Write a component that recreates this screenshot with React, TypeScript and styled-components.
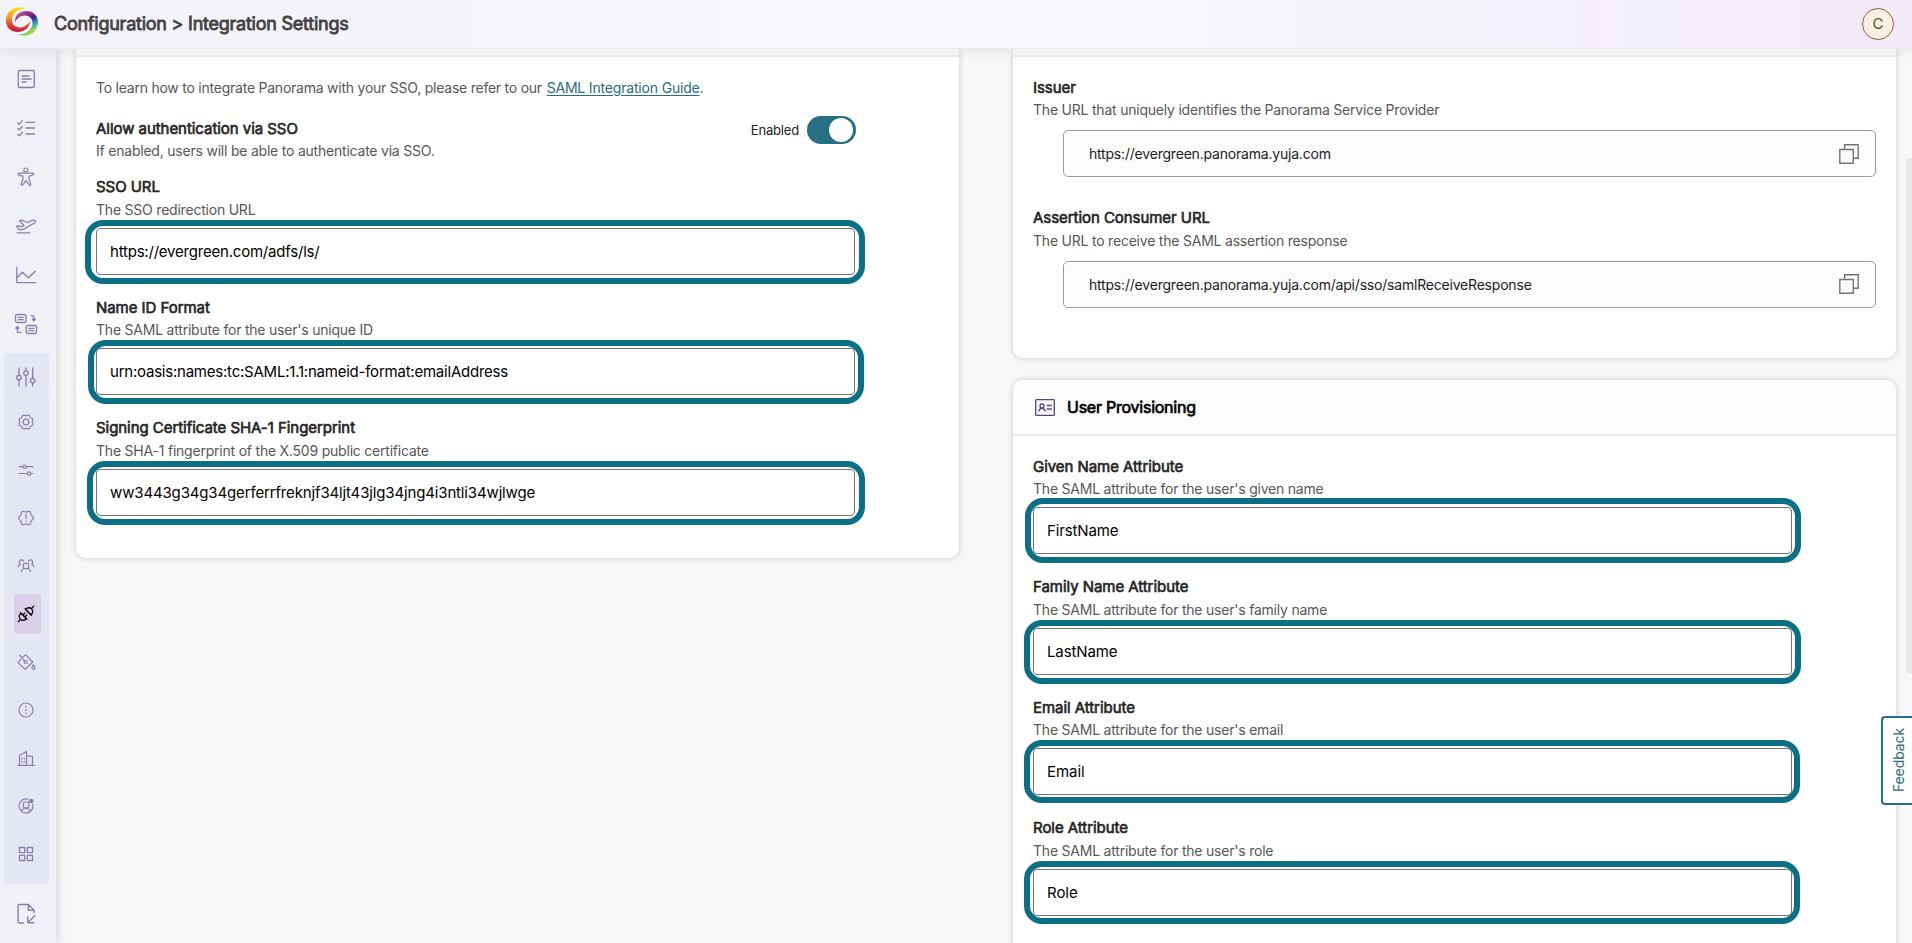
import React from 'react';
import styled, { createGlobalStyle } from 'styled-components';

const Global = createGlobalStyle`
  * { box-sizing: border-box; }
  html, body { margin: 0; height: 100%; overflow: hidden; }
  body {
    font-family: Inter, "Liberation Sans", sans-serif;
    font-size: 14px;
    color: #222;
    background: #f7f7f7;
  }
`;

const Page = styled.div`
  display: flex;
  flex-direction: column;
  width: 1912px;
  height: 943px;
  overflow: hidden;
  position: relative;
`;

const Header = styled.header`
  position: relative;
  z-index: 3;
  flex: none;
  height: 49px;
  display: flex;
  align-items: center;
  justify-content: space-between;
  padding: 0 18px 1px 6px;
  border-bottom: 1px solid #ebe9ee;
  background: linear-gradient(90deg, #f4f3f9 0%, #f5f4fa 30%, #f8f9fe 54%, #f4f1f8 75%, #f3eefb 86%, #f3edf9 93%, #f1eaf6 100%);
  box-shadow: 0 2px 12px rgba(0, 0, 0, 0.08);
`;

const Brand = styled.div`
  display: flex;
  align-items: center;
  gap: 16px;
  svg { display: block; position: relative; top: -1.5px; }
`;

const Title = styled.h1`
  margin: 0;
  font-size: 18px;
  line-height: 24px;
  font-weight: 400;
  letter-spacing: -0.24px;
  color: #434343;
  -webkit-text-stroke: 0.8px currentColor;
`;

const Avatar = styled.div`
  width: 32px;
  height: 32px;
  border-radius: 50%;
  border: 1px solid #856a45;
  background: #faefe0;
  color: #5c4a30;
  font-size: 15px;
  line-height: 30px;
  text-align: center;
`;

const Main = styled.div`
  flex: 1;
  min-height: 0;
  display: flex;
`;

const Sidebar = styled.nav`
  position: relative;
  z-index: 2;
  flex: none;
  width: 56px;
  display: flex;
  flex-direction: column;
  padding: 5.5px 7px 0 4px;
  background: #f0f1f7;
  box-shadow: 1px 0 10px rgba(0, 0, 0, 0.17);
`;

const NavItem = styled.div<{ $h: number }>`
  flex: none;
  height: ${(p) => p.$h}px;
  display: flex;
  align-items: center;
  justify-content: center;
  padding-right: 1px;
  color: #8c7cae;
  svg { display: block; overflow: visible; }
`;

const Group = styled.div`
  flex: none;
  margin-top: 4.5px;
`;

const GroupHead = styled(NavItem)`
  background: #e4e6f3;
  border-radius: 4px;
  padding-top: 9px;
`;

const SubMenu = styled.div`
  background: #e4e6f3;
  border-radius: 4px;
  padding: 6px 0;
`;

const ActiveMark = styled.div`
  width: 27px;
  height: 40px;
  margin-left: 3px;
  padding-right: 3px;
  display: flex;
  align-items: center;
  justify-content: center;
  border-radius: 4px;
  background: #dacfe8;
  color: #111;
`;

const Content = styled.main`
  flex: 1;
  display: flex;
  align-items: flex-start;
  gap: 54px;
  padding-left: 20px;
`;

const Column = styled.div`
  width: 883px;
  display: flex;
  flex-direction: column;
  gap: 22px;
`;

const Card = styled.section<{ $h: number; $open?: boolean }>`
  height: ${(p) => p.$h}px;
  background: #fff;
  border-radius: ${(p) => (p.$open ? '0 0 10px 10px' : '10px')};
  box-shadow: 0 0 6px rgba(0, 0, 0, 0.18);
`;

const CardEdge = styled.div`
  height: 8px;
  background: #fbfbfb;
  border-bottom: 2px solid #ededed;
`;

const CardHeader = styled.div`
  height: 56px;
  display: flex;
  align-items: center;
  gap: 12px;
  padding-left: 22px;
  background: #fcfcfc;
  border-bottom: 2px solid #ededed;
  border-radius: 10px 10px 0 0;
  svg { display: block; }
`;

const CardTitle = styled.h2`
  margin: 0;
  font-size: 16px;
  line-height: 22px;
  font-weight: 400;
  letter-spacing: -0.24px;
  color: #000;
  -webkit-text-stroke: 0.7px currentColor;
`;

const CardBody = styled.div<{ $top: number }>`
  padding: ${(p) => p.$top}px 20px 0;
`;

const Intro = styled.p`
  margin: 0;
  font-size: 14px;
  line-height: 20px;
  letter-spacing: -0.235px;
  color: #575757;
`;

const GuideLink = styled.a`
  margin-left: 1px;
  letter-spacing: -0.18px;
  color: #246d83;
  text-decoration: underline;
  text-underline-offset: 2px;
`;

const ToggleRow = styled.div`
  display: flex;
  justify-content: space-between;
  width: 760px;
  height: 58.3px;
  margin-top: 20px;
`;

const ToggleControl = styled.div`
  display: flex;
  align-items: center;
  gap: 8px;
  height: 24px;
  font-size: 13px;
  letter-spacing: -0.18px;
  color: #222;
`;

const Switch = styled.div`
  width: 49px;
  height: 28px;
  border-radius: 14px;
  background: #266f85;
  display: flex;
  align-items: center;
  justify-content: flex-end;
  padding-right: 3px;
`;

const Knob = styled.div`
  width: 24px;
  height: 24px;
  border-radius: 50%;
  background: #fff;
`;

const Label = styled.div`
  margin-bottom: 0.3px;
  font-size: 15px;
  line-height: 22px;
  letter-spacing: -0.05px;
  color: #262626;
  -webkit-text-stroke: 0.65px currentColor;
`;

const Hint = styled.div`
  font-size: 14px;
  line-height: 22.4px;
  letter-spacing: -0.215px;
  color: #575757;
`;

const FieldBox = styled.div`
  height: 120.5px;
`;

const InputWrap = styled.div`
  position: relative;
  width: 759px;
  margin-top: 6.9px;
`;

const Input = styled.div<{ $tracking: number }>`
  height: 47px;
  border: 1px solid #767676;
  border-radius: 4px;
  padding-left: 13px;
  font-size: 15px;
  line-height: 45px;
  letter-spacing: ${(p) => p.$tracking}px;
  color: #000;
`;

const Highlight = styled.div<{ $l: number; $t: number; $r: number; $b: number }>`
  position: absolute;
  left: ${(p) => -p.$l}px;
  top: ${(p) => -p.$t}px;
  right: ${(p) => -p.$r}px;
  bottom: ${(p) => -p.$b}px;
  border: 6px solid #0b7085;
  border-radius: 18px;
`;

const CopyField = styled.div<{ $h: number }>`
  height: ${(p) => p.$h}px;
`;

const CopyBox = styled.div`
  display: flex;
  align-items: center;
  justify-content: space-between;
  height: 47px;
  margin: 8.7px 0 0 30px;
  padding: 0 16px 0 25px;
  border: 1px solid #9b9b9b;
  border-radius: 5px;
  background: #fcfcfc;
  font-size: 14px;
  letter-spacing: -0.2px;
  color: #1c1c1c;
`;

const Thumb = styled.div`
  position: absolute;
  right: 0;
  top: 158px;
  width: 6px;
  height: 515px;
  border-radius: 4px 0 0 4px;
  background: #e7e7e7;
`;

const Feedback = styled.div`
  position: absolute;
  z-index: 4;
  right: 0;
  top: 716px;
  width: 31px;
  height: 89px;
  display: flex;
  align-items: center;
  justify-content: center;
  padding-left: 2px;
  border: 2px solid #266f85;
  border-right: 0;
  border-radius: 4px 0 0 4px;
  background: #fff;
  color: #266f85;
  font-size: 14px;
  letter-spacing: -0.1px;
  span { writing-mode: vertical-rl; transform: rotate(180deg); }
`;

function Icon({ children, w = 1.1 }: { children: React.ReactNode; w?: number }) {
  return (
    <svg width="24" height="24" viewBox="0 0 24 24" fill="none" stroke="currentColor" strokeWidth={w} strokeLinecap="round" strokeLinejoin="round">
      {children}
    </svg>
  );
}

/* Closed outline whose radius swings between lobes. */
function lobes(count: number, base: number, swing: number, phase = 0) {
  const pts: string[] = [];
  for (let i = 0; i < 96; i++) {
    const a = (i / 96) * Math.PI * 2;
    const r = base + swing * Math.cos(count * a + phase);
    pts.push(`${(12 + r * Math.cos(a)).toFixed(2)} ${(12 + r * Math.sin(a)).toFixed(2)}`);
  }
  return `M${pts.join('L')}Z`;
}

const topIcons = [
  <Icon w={1.3}><rect x="4.3" y="3.5" width="16" height="17" rx="1.4" /><path d="M8 9h7M8 12h9M8 15h4" /></Icon>,
  <Icon w={1.3}><path d="M12 6.3h8.6M12 12h8.6M12 18h8.6M3.8 7l1.5 1.3L8.4 4.7M3.8 12.5l1.5 1.3L8.4 10.3M3.8 18.5l1.5 1.3L8.4 16.3" /></Icon>,
  <Icon w={1.2}><circle cx="11.8" cy="5" r="2" /><path d="M4.6 8.2h14.6c.8.3.7 1.5 0 1.7l-4.2 1.300v3l1.900 5.200c.1 1-1.200 1.300-1.700.5L12 15.500l-3.200 4.400c-.6.700-1.800.4-1.700-.6l1.900-5.100v-3L4.500 9.900c-.7-.3-.6-1.400.1-1.700z" /></Icon>,
  <Icon w={1.3}><path d="M3.2 18.9h12.5" /><path d="M5.500 15.900 2.600 12.300l1.700-.6 2.700 1.200 3-1.700-4.600-4.300 2-.8 6.600 2.400 3.900-2.100c1.500-.7 3.300-.2 3.700 1 .2.700-.4 1.200-1.200 1.600L10.200 14.900c-1.600.8-3.300 1.300-4.700 1z" /></Icon>,
  <Icon w={1.3}><path d="M2.8 4.3v15.4h18.800M3 14.700l5.500-5.400 6 5.400 6.700-6.500" /></Icon>,
  <Icon w={1.3}><rect x="1.5" y="2.5" width="10.5" height="8" rx="2" /><path d="M4.3 5.3h5M4.3 7.7h5" /><rect x="12.2" y="13.5" width="10.3" height="8" rx="2" /><path d="M14.8 16.3h5M14.8 18.7h5" /><path d="M17 3.8h2.8v4.5M18.3 7l1.5 1.7L21.300 7M7 20.300H3.400v-5M1.900 16.200l1.500-1.700 1.500 1.700" /></Icon>,
];

const subIcons = [
  <Icon w={1.2}><path d={lobes(8, 6.8, 0.55, Math.PI)} /><circle cx="12" cy="12" r="2.9" /></Icon>,
  <Icon w={1.2}><path d="M5.2 8.7h3.5M12.3 8.7h6.4M5.2 15.5h8M16.8 15.5h1.900" /><circle cx="10.5" cy="8.7" r="1.7" /><circle cx="15" cy="15.5" r="1.7" /></Icon>,
  <Icon w={1.2}><path d={lobes(6, 6.7, 0.8)} /><path d="M12 8.5v4.2M12 15v.4" /></Icon>,
  <Icon w={1.2}><rect x="9.3" y="9.3" width="5.4" height="5.4" rx="1.6" /><path d="M7.500 17.500c.2-1.300 1-2.300 2.200-2.800M16.500 17.500c-.2-1.300-1-2.300-2.200-2.800M4.200 12.700c.2-1.200.9-2.100 2-2.600-1.500-.9-1-4.300 1.200-4.300 1.100 0 1.900.6 2.200 1.500M19.800 12.700c-.2-1.200-.9-2.100-2-2.600 1.500-.9 1-4.300-1.200-4.300-1.100 0-1.900.6-2.200 1.500" /></Icon>,
  <Icon w={1.3}><path d="M4.3 19.7 6.7 17.3M17.3 6.7l2.4-2.4" /><path d="M7.100 11.300c-2 1.600-2.200 4-.7 5.900 1.600 1.600 4.200 1.400 5.900-.7z" /><path d="M16.900 12.700c2-1.600 2.200-4 .7-5.900-1.600-1.600-4.200-1.400-5.900.7z" /><path d="m8.800 13 2-2M10.800 15l2-2M6.400 10.600l6.600 6.600M11 6.800l6.600 6.600" /></Icon>,
  <Icon w={1.2}><path d="M11.500 4.700 18.800 12 11 19.300 4 12.300zM5.500 5.200l5.300 5.900" /><circle cx="11.6" cy="12" r="1.5" /><path d="M19.400 14.700c1 1.500 1.600 2.300 1.600 3.100a1.500 1.500 0 0 1-3 0c0-.8.500-1.600 1.400-3.100z" /></Icon>,
  <Icon w={1.2}><circle cx="12" cy="12" r="7" /><path d="M12 8.300v1M12 11.500v1M12 14.800v1" /></Icon>,
  <Icon w={1.2}><path d="M3.800 19.400h16.600M5.500 19.200V9.500l7-4v13.700M12.500 10.200h6v9" /><path d="M8 12v1M10.300 12v1M8 15.300v1M10.300 15.300v1" /></Icon>,
  <Icon w={1.2}><path d="M13.700 5.200A7 7 0 1 0 18.800 10.400" /><rect x="9.3" y="8" width="5.6" height="5.8" rx="1.8" /><path d="M7.300 17c.6-1.700 2-2.500 4.700-2.500s4.100.8 4.700 2.500" /><circle cx="17.2" cy="7" r="1.7" fill="currentColor" /></Icon>,
  <Icon w={1.3}><path d="M5.500 5.500h5.200v5.200H5.500zM13.300 5.500h5.200v5.200h-5.200zM5.500 13.300h5.200v5.200H5.500zM13.300 13.300h5.200v5.200h-5.200z" /></Icon>,
];

function Logo() {
  return (
    <svg width="32" height="30" viewBox="0 0 32 30">
      <defs>
        <linearGradient id="warm" x1="0.6" y1="0" x2="0.5" y2="1">
          <stop offset="0" stopColor="#fbe21c" /><stop offset="0.45" stopColor="#f39a2b" /><stop offset="0.8" stopColor="#e0322d" /><stop offset="1" stopColor="#b3244f" />
        </linearGradient>
        <linearGradient id="cool" gradientUnits="userSpaceOnUse" x1="9" y1="8" x2="20" y2="28">
          <stop offset="0" stopColor="#b65aa8" /><stop offset="0.25" stopColor="#8b2d88" /><stop offset="0.5" stopColor="#3b2a86" /><stop offset="0.74" stopColor="#2b9fd6" /><stop offset="0.95" stopColor="#9ad84b" />
        </linearGradient>
      </defs>
      <path d="M20 1.500C10-2.500 0 3.500 0 13.500c0 7 5 11.500 11.500 11.500 7.500 0 12.500-5 13-11.500-2.500 4.500-7 7.500-11.500 7C8 20 5.500 16.500 6 12 6.700 6 12.500 1.500 20 1.500z" fill="url(#warm)" />
      <path d="M12 27.500c10 4 20-2 20-12C32 8.500 27 4 20.500 4 13 4 9 8 9 15c2.500-4.500 6-7 10.500-6.500 5 .5 7.500 4 7 8.500-.7 6-7 10.500-14.500 10.500z" fill="url(#cool)" />
    </svg>
  );
}

function CopyIcon() {
  return (
    <svg width="20" height="20" viewBox="0 0 20 20" fill="none" stroke="#747474" strokeWidth="1.4">
      <path d="M.8 5.500h13.500v13.700H.8zM5.600 5.500V.8h13.600v13.500h-4.900" />
    </svg>
  );
}

type FieldProps = { label: string; hint: string; value: string; ring: [number, number, number, number]; tracking?: number };

function Field({ label, hint, value, ring, tracking = -0.21 }: FieldProps) {
  return (
    <FieldBox>
      <Label>{label}</Label>
      <Hint>{hint}</Hint>
      <InputWrap>
        <Input $tracking={tracking}>{value}</Input>
        <Highlight $t={ring[0]} $r={ring[1]} $b={ring[2]} $l={ring[3]} />
      </InputWrap>
    </FieldBox>
  );
}

const ssoFields: FieldProps[] = [
  { label: 'SSO URL', hint: 'The SSO redirection URL', value: 'https://evergreen.com/adfs/ls/', ring: [8, 10, 9, 11] },
  { label: 'Name ID Format', hint: "The SAML attribute for the user's unique ID", value: 'urn:oasis:names:tc:SAML:1.1:nameid-format:emailAddress', ring: [8, 9, 9, 8], tracking: -0.225 },
  { label: 'Signing Certificate SHA-1 Fingerprint', hint: 'The SHA-1 fingerprint of the X.509 public certificate', value: 'ww3443g34g34gerferrfreknjf34ljt43jlg34jng4i3ntli34wjlwge', ring: [8, 10, 9, 9], tracking: -0.145 },
];

const userFields: FieldProps[] = [
  { label: 'Given Name Attribute', hint: "The SAML attribute for the user's given name", value: 'FirstName', ring: [9, 9, 9, 8], tracking: -0.12 },
  { label: 'Family Name Attribute', hint: "The SAML attribute for the user's family name", value: 'LastName', ring: [8, 9, 9, 9], tracking: -0.12 },
  { label: 'Email Attribute', hint: "The SAML attribute for the user's email", value: 'Email', ring: [8, 8, 8, 9], tracking: -0.05 },
  { label: 'Role Attribute', hint: "The SAML attribute for the user's role", value: 'Role', ring: [8, 8, 8, 9], tracking: -0.05 },
];

export default function App() {
  return (
    <Page>
      <Global />
      <Header>
        <Brand>
          <Logo />
          <Title>Configuration &gt; Integration Settings</Title>
        </Brand>
        <Avatar>C</Avatar>
      </Header>
      <Main>
        <Sidebar>
          {topIcons.map((icon, i) => <NavItem key={i} $h={49}>{icon}</NavItem>)}
          <Group>
            <GroupHead $h={39}>
              <Icon w={1.3}>
                <path d="M5 3v7.2M5 15v6M12 3v2.7M12 10.5V21M18.7 3v10.2M18.7 18v3" />
                <circle cx="5" cy="12.6" r="2.3" /><circle cx="12" cy="8.1" r="2.3" /><circle cx="18.7" cy="15.6" r="2.3" />
              </Icon>
            </GroupHead>
            <SubMenu>
              {subIcons.map((icon, i) => (
                <NavItem key={i} $h={48}>{i === 4 ? <ActiveMark>{icon}</ActiveMark> : icon}</NavItem>
              ))}
            </SubMenu>
          </Group>
          <NavItem $h={60}>
            <Icon w={1.4}><path d="M9.500 21H5.300c-.7 0-1.200-.5-1.200-1.200V3.700c0-.7.500-1.200 1.200-1.200h9L20 8.200v2.300M14.300 2.700V8.200H20M21 13.500l-7 7M13.700 15v5.800h5.800" /></Icon>
          </NavItem>
        </Sidebar>
        <Content>
          <Column>
            <Card $h={509} $open>
              <CardEdge />
              <CardBody $top={21}>
                <Intro>To learn how to integrate Panorama with your SSO, please refer to our <GuideLink>SAML Integration Guide</GuideLink>.</Intro>
                <ToggleRow>
                  <div>
                    <Label>Allow authentication via SSO</Label>
                    <Hint>If enabled, users will be able to authenticate via SSO.</Hint>
                  </div>
                  <ToggleControl>Enabled<Switch><Knob /></Switch></ToggleControl>
                </ToggleRow>
                {ssoFields.map((f) => <Field key={f.label} {...f} />)}
              </CardBody>
            </Card>
          </Column>
          <Column>
            <Card $h={309} $open>
              <CardEdge />
              <CardBody $top={20}>
                <CopyField $h={130.4}>
                  <Label>Issuer</Label>
                  <Hint>The URL that uniquely identifies the Panorama Service Provider</Hint>
                  <CopyBox>https://evergreen.panorama.yuja.com<CopyIcon /></CopyBox>
                </CopyField>
                <CopyField $h={100}>
                  <Label>Assertion Consumer URL</Label>
                  <Hint>The URL to receive the SAML assertion response</Hint>
                  <CopyBox>https://evergreen.panorama.yuja.com/api/sso/samlReceiveResponse<CopyIcon /></CopyBox>
                </CopyField>
              </CardBody>
            </Card>
            <Card $h={600}>
              <CardHeader>
                <svg width="20" height="17" viewBox="0 0 20 17" fill="none" stroke="#57407f" strokeWidth="1.3">
                  <rect x=".7" y=".7" width="18.6" height="15.6" rx=".8" />
                  <circle cx="7" cy="7" r="2" /><path d="M3.700 12.500c.3-2 1.500-3.200 3.300-3.200s3 1.200 3.300 3.200M11.800 6.500h5M11.800 10h5" />
                </svg>
                <CardTitle>User Provisioning</CardTitle>
              </CardHeader>
              <CardBody $top={19.8}>
                {userFields.map((f) => <Field key={f.label} {...f} />)}
              </CardBody>
            </Card>
          </Column>
        </Content>
      </Main>
      <Thumb />
      <Feedback><span>Feedback</span></Feedback>
    </Page>
  );
}
